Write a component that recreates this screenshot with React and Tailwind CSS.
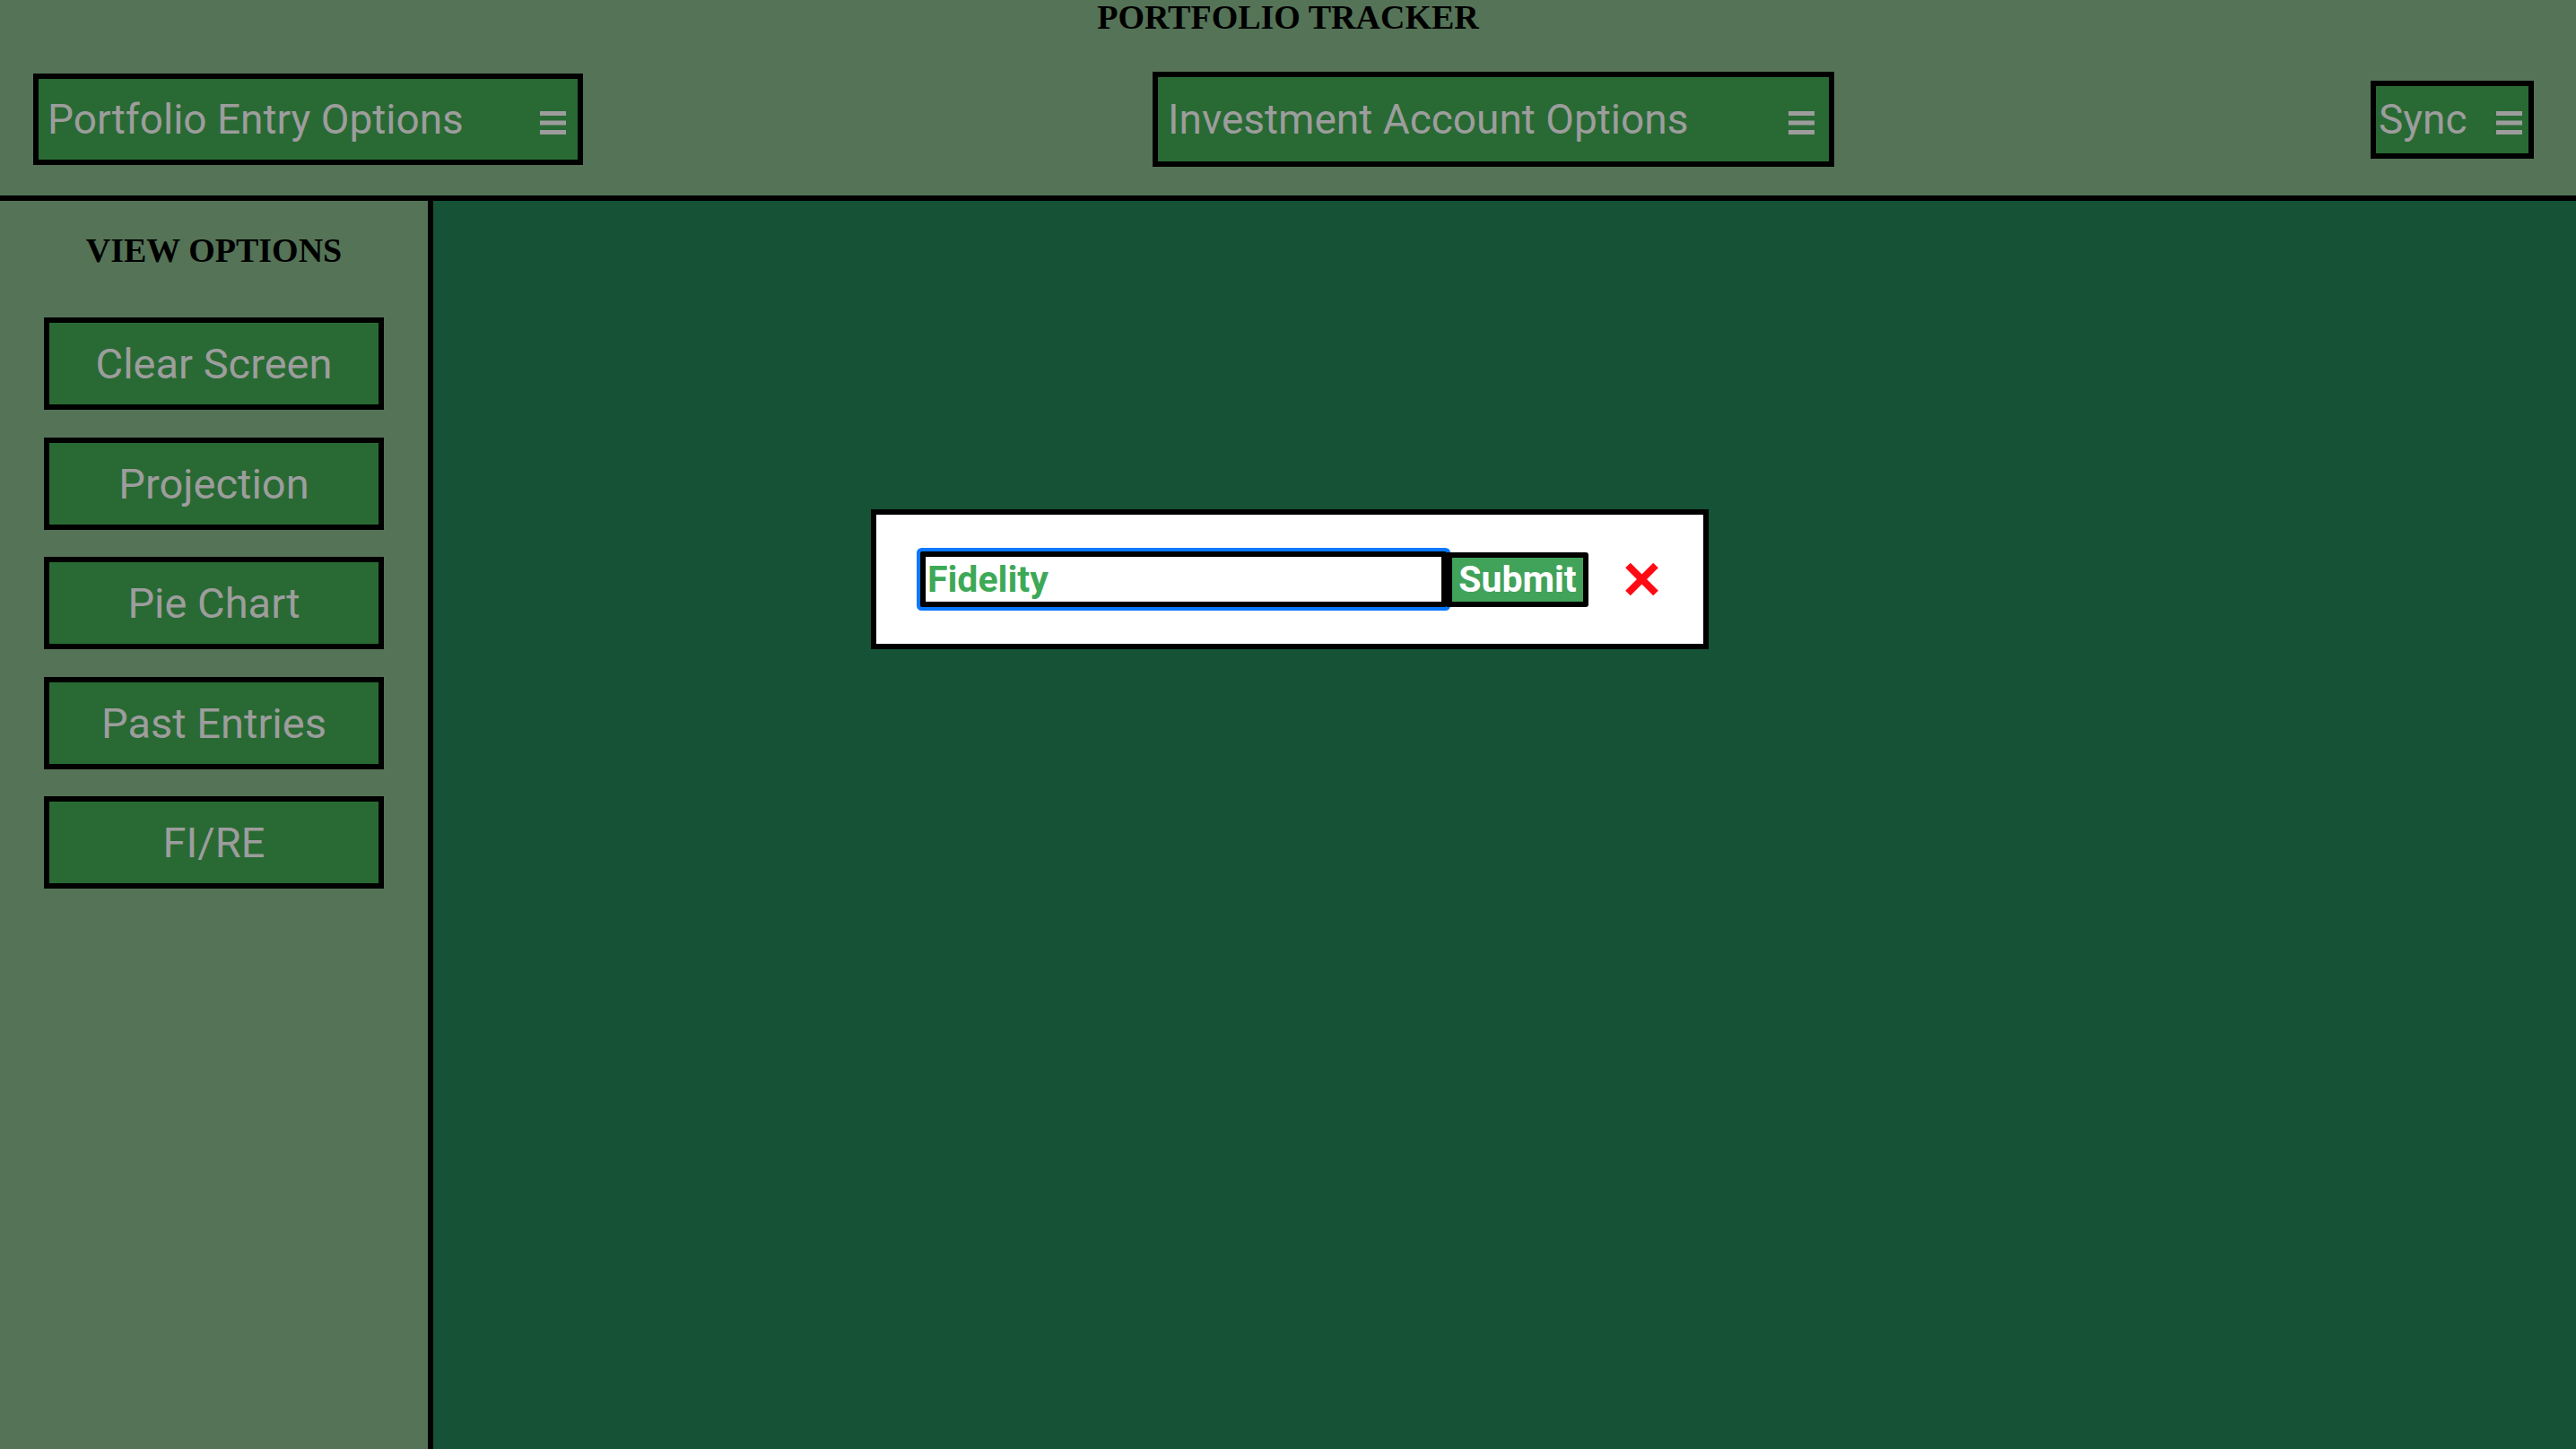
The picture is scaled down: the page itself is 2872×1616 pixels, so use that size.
const HEADER_MENUS = [
    { label: 'Portfolio Entry Options', box: 'w-[613px] h-[102px] pl-[10px]', icon: 'mr-[13px]' },
    { label: 'Investment Account Options', box: 'ml-[635px] w-[760px] h-[106px] pl-[11px]', icon: 'mr-[16px]' },
    { label: 'Sync', box: 'ml-auto w-[182px] h-[87px] pl-[3px]', icon: 'mr-[7px]' },
];

const VIEW_OPTIONS = ['Clear Screen', 'Projection', 'Pie Chart', 'Past Entries', 'FI/RE'];

const Hamburger = ({ className }) => (
    <svg width="29" height="26" viewBox="0 0 29 26" className={`mt-[8px] shrink-0 ${className}`}>
        <rect x="0" y="0" width="29" height="5" fill="#9d9d9d" />
        <rect x="0" y="10.5" width="29" height="5" fill="#9d9d9d" />
        <rect x="0" y="21" width="29" height="5" fill="#9d9d9d" />
    </svg>
);

const CloseIcon = () => (
    <svg width="37" height="38" viewBox="0 0 37 38" className="ml-[41px] shrink-0">
        <line x1="3" y1="3.5" x2="34" y2="34.5" stroke="#ff0a14" strokeWidth="8" />
        <line x1="34" y1="3.5" x2="3" y2="34.5" stroke="#ff0a14" strokeWidth="8" />
    </svg>
);

export default function App() {
    return (
        <div className="relative flex h-screen flex-col bg-[#557357] font-['Roboto',sans-serif]">
            <header className="flex h-[224px] shrink-0 flex-col border-b-[6px] border-black">
                <h1 className="h-[48px] text-center font-['Liberation_Serif',serif] text-[38px] font-bold leading-[38px] text-black">
                    PORTFOLIO TRACKER
                </h1>
                <div className="flex flex-1 items-center pl-[37px] pr-[47px]">
                    {HEADER_MENUS.map((menu) => (
                        <div
                            key={menu.label}
                            className={`flex items-center border-[6px] border-black bg-[#296a34] text-[46px] leading-none text-[#9d9d9d] ${menu.box}`}
                        >
                            <span className="whitespace-nowrap">{menu.label}</span>
                            <Hamburger className={`ml-auto ${menu.icon}`} />
                        </div>
                    ))}
                </div>
            </header>

            <div className="flex min-h-0 flex-1">
                <aside className="flex w-[483px] shrink-0 flex-col items-center border-r-[6px] border-black pt-[36px]">
                    <h2 className="font-['Liberation_Serif',serif] text-[38px] font-bold leading-[38px] text-black">
                        VIEW OPTIONS
                    </h2>
                    <div className="mt-[56px] flex flex-col gap-[30.5px]">
                        {VIEW_OPTIONS.map((option) => (
                            <button
                                key={option}
                                className="flex h-[103px] w-[379px] items-center justify-center border-[6px] border-black bg-[#296a34] text-[47px] leading-none text-[#9d9d9d]"
                            >
                                {option}
                            </button>
                        ))}
                    </div>
                </aside>
                <main className="flex-1 bg-[#155236]" />
            </div>

            <div className="absolute left-[971px] top-[568px] flex h-[156px] w-[934px] items-center border-[6px] border-black bg-white pl-[49px]">
                <input
                    readOnly
                    value="Fidelity"
                    className="h-[62px] w-[587px] rounded-[2px] border-[6px] border-black bg-white px-[2px] text-[41px] font-bold leading-none text-[#3da957] outline-none ring-4 ring-[#0a78ff]"
                />
                <button className="relative flex h-[61px] w-[158px] items-center justify-center rounded-r-[3px] border-[6px] border-black bg-[#41a25a] text-[41px] font-bold leading-none text-white">
                    Submit
                </button>
                <CloseIcon />
            </div>
        </div>
    );
}
